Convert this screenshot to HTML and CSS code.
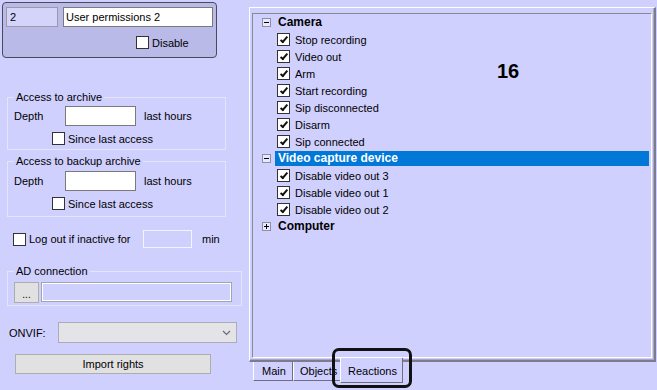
FILE: index.html
```html
<!DOCTYPE html>
<html lang="en">
<head>
    <meta charset="UTF-8">
    <title>User permissions</title>
    <link rel="stylesheet" href="styles.css">
</head>
<body>
    <div class="page">
        <!-- Left settings column -->
        <div class="side">
            <div class="userbox">
                <div class="userbox-row">
                    <div class="field field-id">2</div>
                    <div class="field field-name">User permissions 2</div>
                </div>
                <div class="check-row disable-row"><span class="chk"></span>Disable</div>
            </div>

            <div class="group group-archive">
                <span class="group-title">Access to archive</span>
                <div class="depth-row">
                    <span class="depth-label">Depth</span>
                    <span class="field depth-field"></span>
                    <span class="depth-unit">last hours</span>
                </div>
                <div class="check-row since-row"><span class="chk"></span>Since last access</div>
            </div>

            <div class="group group-backup">
                <span class="group-title">Access to backup archive</span>
                <div class="depth-row">
                    <span class="depth-label">Depth</span>
                    <span class="field depth-field"></span>
                    <span class="depth-unit">last hours</span>
                </div>
                <div class="check-row since-row"><span class="chk"></span>Since last access</div>
            </div>

            <div class="logout-row">
                <span class="chk"></span>
                <span class="logout-label">Log out if inactive for</span>
                <span class="field logout-field"></span>
                <span class="logout-unit">min</span>
            </div>

            <div class="group group-ad">
                <span class="group-title">AD connection</span>
                <div class="ad-row">
                    <span class="btn dots-btn">...</span>
                    <span class="field ad-field"></span>
                </div>
            </div>

            <div class="onvif-row">
                <span class="onvif-label">ONVIF:</span>
                <span class="combo">
                    <svg width="9" height="6" viewBox="0 0 9 6"><polyline points="1,1 4.5,4.5 8,1" fill="none" stroke="#6b6b6b" stroke-width="1.2"/></svg>
                </span>
            </div>

            <div class="btn import-btn">Import rights</div>
        </div>

        <!-- Right tab control -->
        <div class="tabs">
            <div class="tab-frame">
                <div class="tree">
                    <div class="node"><span class="exp minus"></span><span class="node-label">Camera</span></div>
                    <div class="leaf"><span class="chk on"></span>Stop recording</div>
                    <div class="leaf"><span class="chk on"></span>Video out</div>
                    <div class="leaf"><span class="chk on"></span>Arm</div>
                    <div class="leaf"><span class="chk on"></span>Start recording</div>
                    <div class="leaf"><span class="chk on"></span>Sip disconnected</div>
                    <div class="leaf"><span class="chk on"></span>Disarm</div>
                    <div class="leaf"><span class="chk on"></span>Sip connected</div>
                    <div class="node selected"><span class="exp minus"></span><span class="node-label">Video capture device</span></div>
                    <div class="leaf"><span class="chk on"></span>Disable video out 3</div>
                    <div class="leaf"><span class="chk on"></span>Disable video out 1</div>
                    <div class="leaf"><span class="chk on"></span>Disable video out 2</div>
                    <div class="node"><span class="exp plus"></span><span class="node-label">Computer</span></div>

                    <span class="step-num">16</span>
                </div>
            </div>
            <div class="tab-strip">
                <span class="tab tab-main">Main</span>
                <span class="tab tab-objects">Objects</span>
                <span class="tab tab-reactions">Reactions<span class="callout"></span></span>
            </div>
        </div>
    </div>
</body>
</html>
```

FILE: styles.css
```css
body {
    margin: 0;
    width: 657px;
    height: 390px;
    overflow: hidden;
    background: #d0d0fe;
    font-family: "Liberation Sans", Arial, sans-serif;
    font-size: 11px;
    color: #000;
}
.page {
    display: flex;
    align-items: flex-start;
}
.side {
    width: 249px;
    flex-shrink: 0;
}

/* generic controls */
.field {
    display: block;
    box-sizing: border-box;
    height: 20px;
    border: 1px solid #7a7a7a;
    background: #fff;
    line-height: 18px;
    padding-left: 2px;
    white-space: nowrap;
}
.chk {
    display: inline-block;
    position: relative;
    box-sizing: border-box;
    width: 13px;
    height: 13px;
    border: 1px solid #333;
    background: #fff;
    flex-shrink: 0;
}
.chk.on::after {
    content: '';
    position: absolute;
    left: 4px;
    top: 1px;
    width: 2px;
    height: 6px;
    border-right: 2px solid #111;
    border-bottom: 2px solid #111;
    transform: rotate(40deg);
}
.check-row {
    display: flex;
    align-items: center;
    gap: 3px;
    height: 13px;
}
.btn {
    display: block;
    box-sizing: border-box;
    background: #e1e1e1;
    border: 1px solid #adadad;
    text-align: center;
}

/* user box */
.userbox {
    box-sizing: border-box;
    margin: 2px 0 0 2px;
    width: 215px;
    height: 56px;
    padding: 4px 3px 0 3px;
    background: #babae8;
    border: 1px solid #4a4a58;
    border-radius: 4px;
}
.userbox-row {
    display: flex;
    gap: 5px;
}
.field-id {
    width: 52px;
    background: #d4d4fa;
    border-color: #9a9aa8;
    padding-left: 3px;
}
.field-name {
    width: 150px;
}
.disable-row {
    margin: 9px 0 0 130px;
}

/* group boxes */
.group {
    box-sizing: border-box;
    margin-left: 7px;
    width: 219px;
    border: 1px solid #e4e4fb;
}
.group-title {
    display: block;
    width: fit-content;
    margin: -7px 0 0 6px;
    padding: 0 2px;
    line-height: 13px;
    background: #d0d0fe;
}
.group-archive {
    margin-top: 39px;
    height: 53px;
}
.group-archive .depth-row {
    margin-top: 2px;
}
.group-backup {
    margin-top: 11px;
    height: 56px;
}
.group-backup .depth-row {
    margin-top: 3px;
}
.depth-row {
    display: flex;
    align-items: center;
    height: 20px;
}
.depth-label {
    width: 51px;
    margin-left: 6px;
}
.depth-field {
    width: 71px;
}
.depth-unit {
    margin-left: 8px;
}
.since-row {
    margin: 6px 0 0 44px;
}

/* logout */
.logout-row {
    display: flex;
    align-items: center;
    height: 18px;
    margin: 13px 0 0 13px;
}
.logout-label {
    width: 114px;
    margin-left: 3px;
}
.logout-field {
    width: 49px;
    height: 18px;
    background: #d0d0fe;
    border-color: #f4f4ff;
}
.logout-unit {
    margin-left: 10px;
}

/* AD connection */
.group-ad {
    margin-top: 23px;
    width: 235px;
    height: 35px;
}
.ad-row {
    display: flex;
    margin: 4px 0 0 6px;
    gap: 2px;
}
.dots-btn {
    width: 25px;
    height: 21px;
    line-height: 24px;
    font-size: 10px;
}
.ad-field {
    width: 191px;
    background: #d0d0fe;
    border-color: #a4a4ae;
    box-shadow: inset 0 0 0 1px #fff;
}

/* ONVIF */
.onvif-row {
    display: flex;
    align-items: center;
    margin: 16px 0 0 9px;
    height: 21px;
}
.onvif-label {
    width: 49px;
}
.combo {
    box-sizing: border-box;
    width: 179px;
    height: 21px;
    display: flex;
    align-items: center;
    justify-content: flex-end;
    padding-right: 5px;
    background: #e4e4e8;
    border: 1px solid #acacb4;
}
.import-btn {
    margin: 11px 0 0 15px;
    width: 196px;
    height: 20px;
    line-height: 18px;
}

/* tab control */
.tabs {
    margin-top: 7px;
    width: 407px;
}
.tab-frame {
    box-sizing: border-box;
    width: 407px;
    height: 355px;
    padding: 5px 2px 2px 2px;
    border-top: 1px solid #fff;
    border-left: 1px solid #fff;
    border-right: 2px solid #7c7c8c;
    border-bottom: 2px solid #7c7c8c;
    box-shadow: inset -1px -1px 0 #a8a8c0;
}
.tree {
    position: relative;
    box-sizing: border-box;
    height: 100%;
    border-top: 1px solid #8a8a96;
    border-left: 1px solid #8a8a96;
    border-right: 1px solid #fff;
    border-bottom: 1px solid #fff;
}
.node,
.leaf {
    display: flex;
    align-items: center;
    height: 17px;
}
.node {
    padding-left: 9px;
    font-size: 12px;
    font-weight: bold;
}
.exp {
    position: relative;
    box-sizing: border-box;
    width: 9px;
    height: 9px;
    border: 1px solid #8e8e9e;
    background: #e8e8ff;
    flex-shrink: 0;
}
.exp::before {
    content: '';
    position: absolute;
    left: 1px;
    top: 3px;
    width: 5px;
    height: 1px;
    background: #000;
}
.exp.plus::after {
    content: '';
    position: absolute;
    left: 3px;
    top: 1px;
    width: 1px;
    height: 5px;
    background: #000;
}
.node-label {
    margin-left: 4px;
    padding-left: 3px;
    line-height: 15px;
}
.node.selected .node-label {
    flex: 1;
    margin-right: 2px;
    background: #0078d7;
    color: #fff;
}
.leaf {
    padding-left: 24px;
    gap: 5px;
}
.step-num {
    position: absolute;
    left: 244px;
    top: 47px;
    font-size: 20px;
    font-weight: bold;
    line-height: 20px;
}

/* tab strip */
.tab-strip {
    display: flex;
    align-items: flex-start;
    margin-left: 4px;
}
.tab {
    box-sizing: border-box;
    height: 19px;
    line-height: 18px;
    border-left: 1px solid #fff;
    border-right: 1px solid #6e6e7e;
    border-bottom: 1px solid #6e6e7e;
    background: #d0d0fe;
    white-space: nowrap;
    overflow: hidden;
}
.tab-main {
    width: 40px;
    padding-left: 8px;
}
.tab-objects {
    width: 50px;
    padding-left: 6px;
}
.tab-reactions {
    position: relative;
    z-index: 1;
    overflow: visible;
    width: 63px;
    height: 25px;
    margin: -4px 0 0 -3px;
    padding: 3px 0 0 7px;
    line-height: 20px;
}
.callout {
    position: absolute;
    left: -9px;
    top: -10px;
    right: -10px;
    bottom: -6px;
    border: 3px solid #111;
    border-radius: 7px;
}
```
